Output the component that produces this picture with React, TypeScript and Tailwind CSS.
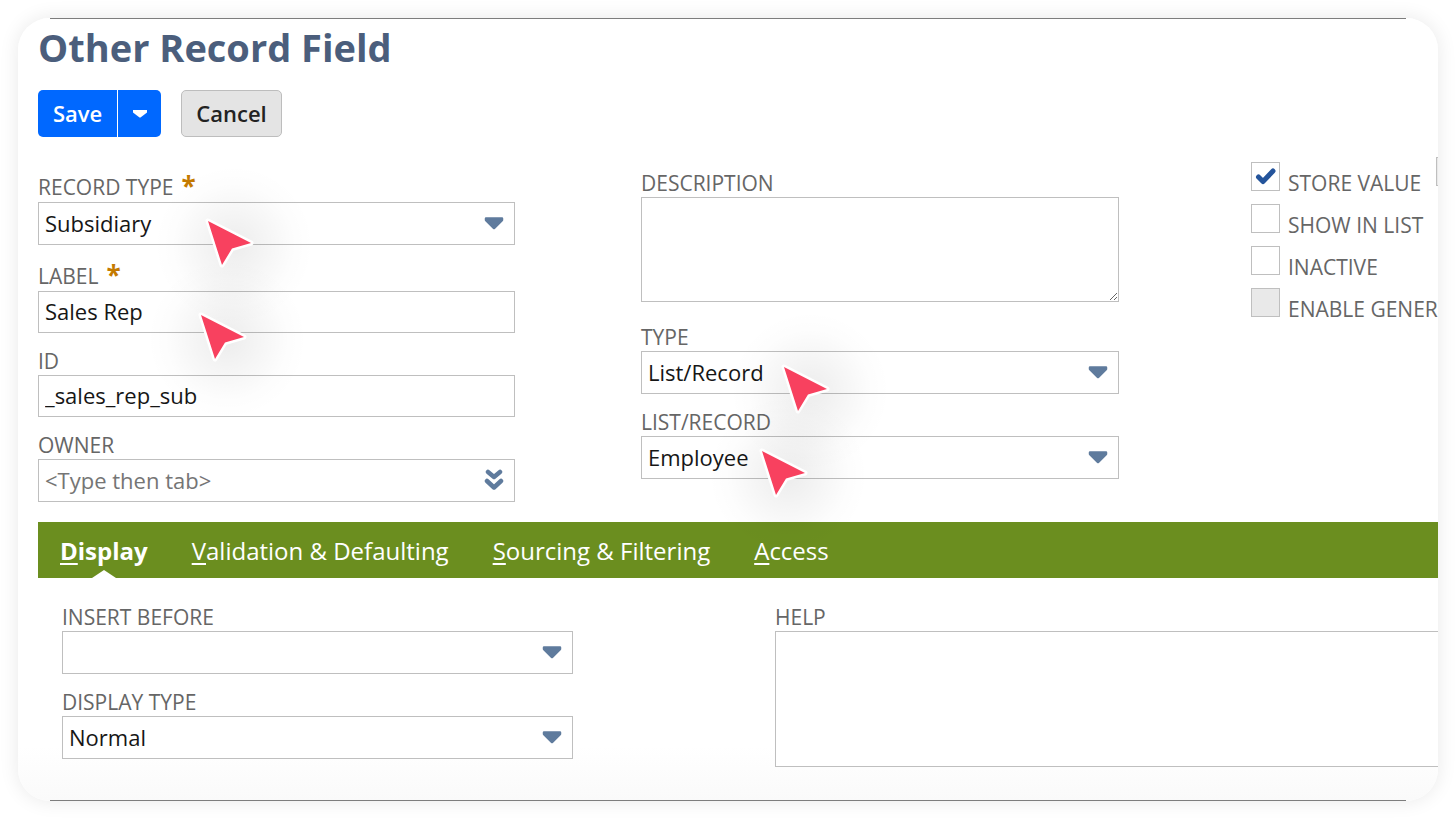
import React from 'react';
import { clsx } from 'clsx';

interface FieldProps {
  id: string;
  label: string;
  required?: boolean;
  pointer?: string;
  children: React.ReactNode;
}

interface SelectProps {
  id: string;
  options: string[];
}

interface CheckProps {
  id: string;
  label: string;
  checked?: boolean;
  disabled?: boolean;
}

const tabs = ['Display', 'Validation & Defaulting', 'Sourcing & Filtering', 'Access'];

const flags: CheckProps[] = [
  { id: 'store-value', label: 'STORE VALUE', checked: true },
  { id: 'show-in-list', label: 'SHOW IN LIST' },
  { id: 'inactive', label: 'INACTIVE' },
  { id: 'enable-generic', label: 'ENABLE GENERIC', disabled: true },
];

const boxClass = 'block w-full border border-[#bfbfbf] bg-white px-1.5 text-[22px] text-[#161616] outline-none';

// Red arrow that marks a field, with a soft shadow behind it. The tip is at 60,60.
const Pointer = ({ className }: { className: string }) => (
  <svg
    className={clsx('pointer-events-none absolute z-10 h-[180px] w-[180px]', className)}
    viewBox="0 0 180 180"
    aria-hidden="true"
  >
    <defs>
      <radialGradient id="pointer-shadow">
        <stop offset="0" stopColor="#000" stopOpacity="0.075" />
        <stop offset="0.4" stopColor="#000" stopOpacity="0.04" />
        <stop offset="0.75" stopColor="#000" stopOpacity="0.01" />
        <stop offset="1" stopColor="#000" stopOpacity="0" />
      </radialGradient>
    </defs>
    <circle cx="86" cy="84" r="80" fill="url(#pointer-shadow)" />
    <path
      d="M60 60 L103 82 L84 87.5 L74 104 Z"
      fill="#f8415f"
      stroke="#fff"
      strokeWidth="5"
      strokeLinejoin="round"
      paintOrder="stroke"
    />
  </svg>
);

const Field = ({ id, label, required, pointer, children }: FieldProps) => (
  <div className="relative">
    <label
      htmlFor={id}
      className={clsx('flex text-[21px] text-[#666]', required ? 'h-[30px] leading-[30px]' : 'h-[26px] leading-6')}
    >
      {label}
      {required && <span className="ml-2 text-[26px] leading-7 font-bold text-[#c47a00]">*</span>}
    </label>
    {children}
    {pointer && <Pointer className={pointer} />}
  </div>
);

const Select = ({ id, options }: SelectProps) => (
  <div className="relative">
    <select id={id} className={clsx(boxClass, 'h-[43px] appearance-none rounded-none')}>
      {options.map((o) => (
        <option key={o}>{o}</option>
      ))}
    </select>
    <svg className="pointer-events-none absolute top-[15px] right-[11px] h-[13px] w-5" viewBox="0 0 20 13">
      <path d="M2 1.5 H18 V3 L10 11 L2 3 Z" fill="#5f7b9d" stroke="#5f7b9d" strokeWidth="2.5" strokeLinejoin="round" />
    </svg>
  </div>
);

const Check = ({ id, label, checked, disabled }: CheckProps) => (
  <div className="flex h-[42px] items-start">
    <div className="relative shrink-0">
      <input
        id={id}
        type="checkbox"
        defaultChecked={checked}
        disabled={disabled}
        className="peer block h-[29px] w-[29px] appearance-none border border-[#bfbfbf] bg-white disabled:bg-[#e9e9e9]"
      />
      <svg className="pointer-events-none absolute top-0 left-0 hidden h-[29px] w-[29px] peer-checked:block" viewBox="0 0 29 29">
        <path d="M7.500 15 L12 19.500 L22 9" fill="none" stroke="#24549b" strokeWidth="5" strokeLinecap="round" strokeLinejoin="round" />
      </svg>
    </div>
    <label htmlFor={id} className="mt-2 ml-2 text-[21px] leading-[26px] whitespace-nowrap text-[#666]">
      {label}
    </label>
  </div>
);

export default function App() {
  return (
    <div className="flex min-h-screen flex-col bg-white p-[18px] font-['Open_Sans','Noto_Sans',sans-serif]">
      <main className="flex flex-1 flex-col overflow-hidden rounded-[32px] bg-linear-to-b from-white from-93% to-[#fafafa] shadow-[0_0_20px_rgba(0,0,0,0.09)]">
        <div className="mx-8 h-px bg-[#7d7d7d]" />

        <div className="flex-1 pl-5">
          <h1 className="pt-0.5 text-[38px] leading-[52px] font-bold text-[#4b5e7c]">Other Record Field</h1>

          <div className="mt-[17px] flex h-[47px] gap-5 text-[22px] font-semibold">
            <div className="flex overflow-hidden rounded-[5px] bg-[#0068ff] text-white">
              <button type="button" className="px-[15px]">Save</button>
              <button type="button" aria-label="More save options" className="flex w-11 items-center justify-center border-l border-white">
                <svg className="h-[9px] w-[14px]" viewBox="0 0 14 9">
                  <path d="M0 1 H14 V3.500 L7.500 8.500 H6.500 L0 3.500 Z" fill="#fff" />
                </svg>
              </button>
            </div>
            <button type="button" className="rounded-[5px] border border-[#bdbdbd] bg-[#e4e4e4] px-[14px] text-[#222]">
              Cancel
            </button>
          </div>

          <div className="mt-5 grid grid-cols-[603fr_610fr_minmax(0,187fr)]">
            <div className="mt-[15px] flex flex-col gap-4 pr-[126px]">
              <Field id="record-type" label="RECORD TYPE" required pointer="top-[-11px] left-[110px]">
                <Select id="record-type" options={['Subsidiary']} />
              </Field>
              <Field id="label" label="LABEL" required pointer="top-[-6px] left-[103px]">
                <input id="label" defaultValue="Sales Rep" className={clsx(boxClass, 'h-[42px] pb-0.5')} />
              </Field>
              <Field id="id" label="ID">
                <input id="id" defaultValue="_sales_rep_sub" className={clsx(boxClass, 'h-[42px] pb-0.5')} />
              </Field>
              <Field id="owner" label="OWNER">
                <div className="relative">
                  <input id="owner" placeholder="<Type then tab>" className={clsx(boxClass, 'h-[43px] pb-0.5 placeholder:text-[#757575]')} />
                  <button type="button" aria-label="List owners" className="absolute top-[10px] right-[11px]">
                    <svg className="h-[22px] w-5" viewBox="0 0 20 22">
                      <path
                        d="M4 3 L10 8 L16 3 M3 12 L10 18.500 L17 12"
                        fill="none"
                        stroke="#5f7b9d"
                        strokeWidth="4.500"
                        strokeLinecap="round"
                        strokeLinejoin="round"
                      />
                    </svg>
                  </button>
                </div>
              </Field>
            </div>

            <div className="mt-[14px] flex flex-col pr-[132px]">
              <Field id="description" label="DESCRIPTION">
                <textarea id="description" className={clsx(boxClass, 'h-[105px]')} />
              </Field>
              <div className="mt-[23px] flex flex-col gap-4">
                <Field id="type" label="TYPE" pointer="top-[-18px] left-[83px]">
                  <Select id="type" options={['List/Record']} />
                </Field>
                <Field id="list-record" label="LIST/RECORD" pointer="top-[-19px] left-[61px]">
                  <Select id="list-record" options={['Employee']} />
                </Field>
              </div>
            </div>

            <div className="flex">
              <div className="mt-[5px] w-[185px] shrink-0">
                {flags.map((f) => (
                  <Check key={f.id} {...f} />
                ))}
              </div>
              <input
                type="checkbox"
                aria-label="Available to SSO"
                disabled
                className="h-[29px] w-[29px] shrink-0 appearance-none border border-[#bfbfbf] bg-[#e9e9e9]"
              />
            </div>
          </div>

          <nav className="mt-5 flex h-14 items-center gap-11 bg-[#6b8e1f] px-[22px] text-2xl text-white">
            {tabs.map((tab, i) => (
              <a
                key={tab}
                href={`#${tab.toLowerCase().split(' ')[0]}`}
                className={clsx('relative flex h-full items-center whitespace-nowrap', i === 0 && 'font-bold')}
              >
                <span className="pt-px">
                  <span className="underline decoration-2 underline-offset-3">{tab[0]}</span>
                  {tab.slice(1)}
                </span>
                {i === 0 && (
                  <svg className="absolute bottom-0 left-1/2 h-2 w-6 -translate-x-1/2" viewBox="0 0 24 8">
                    <path d="M0 8 L12 0 L24 8 Z" fill="#fff" />
                  </svg>
                )}
              </a>
            ))}
          </nav>

          <div className="grid grid-cols-[713fr_663fr] pt-[27px] pb-8 pl-6">
            <div className="flex flex-col gap-4 pr-[202px]">
              <Field id="insert-before" label="INSERT BEFORE">
                <Select id="insert-before" options={['']} />
              </Field>
              <Field id="display-type" label="DISPLAY TYPE">
                <Select id="display-type" options={['Normal']} />
              </Field>
            </div>
            <div className="-mr-8">
              <Field id="help" label="HELP">
                <textarea id="help" className={clsx(boxClass, 'h-[136px]')} />
              </Field>
            </div>
          </div>
        </div>

        <div className="mx-8 h-px bg-[#7d7d7d]" />
      </main>
    </div>
  );
}
